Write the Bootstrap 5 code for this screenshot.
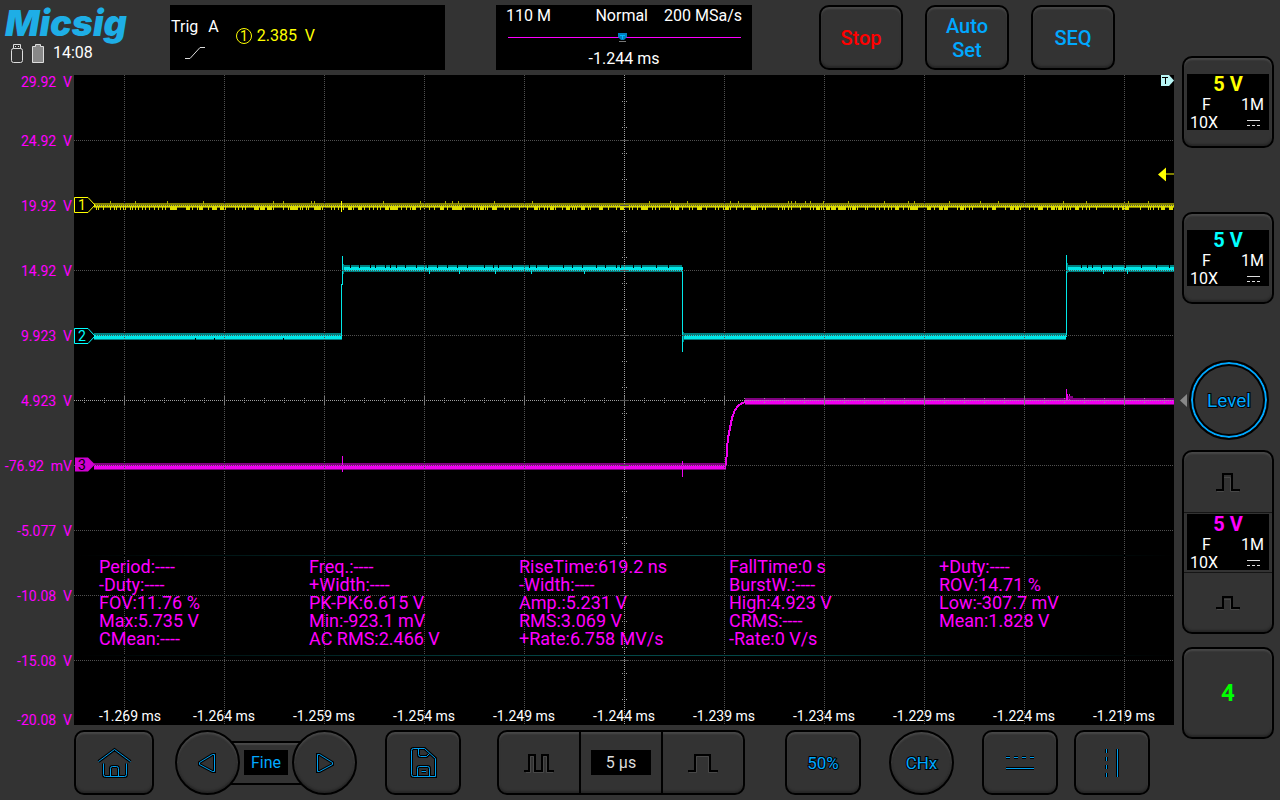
<!DOCTYPE html>
<html lang="en">
<head>
<meta charset="utf-8">
<meta name="viewport" content="width=device-width, initial-scale=1">
<title>Micsig oscilloscope</title>
<link rel="stylesheet" href="https://cdn.jsdelivr.net/npm/bootstrap@5.3.0/dist/css/bootstrap.min.css">
<style>
:root { --panel:#333; --blue:#00a8ff; --ch1:#ff0; --ch2:#0ff; --ch3:#f0f; --ch4:#0f0; }
body { background:var(--panel); color:#fff; font-family:Roboto,"Liberation Sans",sans-serif; font-size:16px; line-height:18px; }
button { font-family:inherit; }
.device { display:grid; grid-template-columns:74px minmax(0,1fr) 106px; grid-template-rows:75px minmax(0,1fr) 75px; min-height:100vh; }
.topbar { grid-column:1 / 3; padding-top:5px; }
.sidebar { grid-column:3; grid-row:1 / 4; padding:56px 6px 0 8px; }
.toolbar-row { grid-column:1 / 3; padding:5px 0 0 74px; }

.brandbox { width:170px; padding-left:5px; }
.logo { font-family:Inter,"Liberation Sans",sans-serif; font-weight:900; font-style:italic; font-size:36px; line-height:36px; color:#1eaee6; }
.status { gap:9px; padding:2px 0 0 6px; }
.screen { background:#000; height:65px; }
.trigbox { width:275px; padding:13px 1px; }
.ch1 { color:var(--ch1); } .ch2 { color:var(--ch2); } .ch3 { color:var(--ch3); }
.trigname { margin-right:10px; }
.trigval { margin-left:14px; margin-top:-4px; }
.timebox { width:256px; margin-left:51px; padding:2px 10px; }
.topkeys { gap:22px; margin-right:59px; }

.key { background:var(--panel); border:2px solid #000; border-radius:10px; color:var(--blue); padding:0; height:65px; display:flex; align-items:center; justify-content:center; box-shadow:inset 0 2px 2px #484848, inset 0 -2px 2px #262626; line-height:24px; }
.key-top { width:84px; font-size:20px; font-weight:500; }
.key-std { width:76px; }
.key-home { width:80px; }
.round { width:65px; border-radius:50%; position:relative; }
.outlined { -webkit-text-stroke:2px #000; paint-order:stroke; font-size:17px; }
.stop { color:#f00; }

.yaxis { display:grid; grid-template-rows:33px repeat(9,minmax(0,1fr)) 32px; justify-items:end; align-items:center; padding-right:2px; color:var(--ch3); font-size:14px; line-height:14px; white-space:pre; }
.yaxis > :first-child { align-self:start; }
.yaxis > :last-child { align-self:end; line-height:10px; }
.scope { background:#000; position:relative; min-height:400px; }
.scope > .plot { position:absolute; inset:0; width:100%; height:100%; }
.pin { position:absolute; left:0; transform:translateY(-50%); }
.pin-right { left:auto; right:0; }
.at1 { top:20%; } .at2 { top:40%; } .at3 { top:60%; } .attrig { top:15%; }
.readings { position:relative; margin:auto 0 51px 5px; padding:2px 0 7px 20px; display:grid; grid-template-columns:repeat(5,minmax(0,210px)); color:var(--ch3); font-size:18px; line-height:18px; white-space:nowrap; border:solid; border-width:1px 0; border-image:linear-gradient(90deg,#000,#034848 45%,#034848 60%,#000) 1; }
.xaxis { position:relative; display:grid; grid-template-columns:repeat(11,minmax(0,1fr)); text-align:center; font-size:14px; white-space:nowrap; }
.xaxis > :first-child { text-align:left; padding-left:25px; }

.chan { width:92px; height:92px; }
.chan + .chan { margin-top:64px; }
.readout { background:#000; width:82px; height:56px; color:#fff; padding:0 5px 0 3px; line-height:18px; font-size:16px; }
.volts { display:block; font-size:20px; font-weight:700; line-height:21px; margin-bottom:1px; text-align:center; padding-left:2px; }
.coupling { padding-left:12px; }
.level { width:80px; height:80px; margin:56px 0 0 7px; border:2px solid #000; border-radius:50%; background:var(--panel); color:var(--blue); font-size:19px; padding:2px 0 0; box-shadow:inset 0 0 0 2px var(--blue), inset 0 0 0 4px #000; position:relative; -webkit-text-stroke:2px #000; paint-order:stroke; }
.level svg { position:absolute; left:-11px; top:32px; }
.stack { width:92px; height:184px; margin-top:10px; flex-direction:column; overflow:hidden; }
.stack > button { background:none; border:0; width:100%; flex:1; padding:2px 0 0; }
.stack > .mid { border:1px solid #151515; border-width:1px 0; padding:1px 0 2px; width:100%; display:flex; justify-content:center; }
.last { margin-top:13px; font-size:24px; font-weight:700; color:var(--ch4); }

.finebar { width:70px; height:44px; margin:0 -9px; border:2px solid #000; border-width:2px 0; background:var(--panel); box-shadow:inset 0 2px 1px #484848; display:flex; align-items:center; justify-content:center; }
.tag { background:#000; height:25px; display:flex; align-items:center; justify-content:center; }
.tag-fine { width:44px; color:var(--blue); }
.tag-base { width:60px; color:#ddd; }
.timebase { width:248px; }
.timebase > * { flex:1; height:100%; background:none; border:0; padding:0; display:flex; align-items:center; justify-content:center; }
.timebase > * + * { border-left:2px solid #000; }
.g21 { margin-left:21px; } .g28 { margin-left:28px; } .g36 { margin-left:36px; } .g40 { margin-left:40px; } .g16 { margin-left:16px; }
.ic { fill:none; display:block; }
.ic .o { stroke:#000; stroke-width:3; } .ic .i { stroke:#00a0f0; stroke-width:1; }
.ic .k { stroke:#000; stroke-width:2; }
.ic .h { stroke:#484848; stroke-width:1; }
</style>
</head>
<body>
<svg width="0" height="0" class="position-absolute" aria-hidden="true">
  <defs>
    <path id="home" d="M1.500 15.500 L17.500 3.500 L33.500 15.500 M6.500 17.500 V28.500 Q6.500 30.500 8.500 30.500 H27.500 Q29.500 30.500 29.500 28.500 V17.500 M13.500 30.500 V22.500 Q13.500 20.500 15.500 20.500 H19.500 Q21.500 20.500 21.500 22.500 V30.500"/>
    <path id="prev" d="M17.500 2.500 V19.500 L15.500 19.500 L2.500 12.500 V10.500 L15.500 2.500 Z"/>
    <path id="next" d="M2.500 2.500 V19.500 L4.500 19.500 L17.500 12.500 V10.500 L4.500 2.500 Z"/>
    <path id="save" d="M4.500 2.500 H15.500 L26.500 12.500 V30.500 H4.500 Q2.500 30.500 2.500 28.500 V4.500 Q2.500 2.500 4.500 2.500 Z M9.500 2.500 V8.500 Q9.500 10.500 11.500 10.500 H17.500 L20.500 7.500 M8.500 30.500 V22.500 Q8.500 20.500 10.500 20.500 H18.500 Q20.500 20.500 20.500 22.500 V30.500 M12.500 25.500 H17"/>
    <path id="hcur" d="M2 3.500 H6 M10 3.500 H14 M18 3.500 H22 M26 3.500 H30 M2 14.500 H30"/>
    <path id="vcur" d="M3.500 2 V6 M3.500 10 V14 M3.500 18 V22 M3.500 26 V30 M14.500 2 V30"/>
    <path id="dc" d="M0 .5 H13 M0 5.500 H3 M5 5.500 H8 M10 5.500 H13"/>
  </defs>
</svg>

<div class="device">
  <header class="topbar d-flex align-items-start">
    <div class="brandbox">
      <div class="logo">Micsig</div>
      <div class="status d-flex align-items-center">
        <svg width="12" height="20" viewBox="0 0 12 20" fill="none" stroke="#ddd" aria-hidden="true"><path d="M2.500 5.500 V1.500 H9.500 V5.500 M4 3.500 H5 M7 3.500 H8 M.5 7.500 Q.5 5.500 2.500 5.500 H9.500 Q11.500 5.500 11.500 7.500 V17.500 Q11.500 19.500 9.500 19.500 H2.500 Q.5 19.500 .5 17.500 Z"/></svg>
        <svg width="12" height="20" viewBox="0 0 12 20" fill="#888" stroke="#ddd" aria-hidden="true"><path d="M.5 3.500 H3.500 V1.500 H8.500 V3.500 H11.500 V19.500 H.5 Z"/></svg>
        <span>14:08</span>
      </div>
    </div>
    <section class="screen trigbox d-flex" aria-label="Trigger">
      <div>
        <div class="d-flex"><span class="trigname">Trig</span><span>A</span></div>
        <svg class="d-block mt-1" width="34" height="20" viewBox="0 0 34 20" fill="none" stroke="#ddd" aria-hidden="true"><path d="M14 18.500 H19 L29 7.500 H34"/></svg>
      </div>
      <div class="ch1 trigval d-flex align-items-center gap-1">
        <svg width="20" height="20" viewBox="0 0 20 20" aria-hidden="true"><circle cx="11" cy="10" r="7.500" fill="none" stroke="#ff0" stroke-width="1"/><text x="11" y="15" text-anchor="middle" font-size="14" fill="#ff0">1</text></svg>
        <span>2.385&nbsp; V</span>
      </div>
    </section>
    <section class="screen timebox" aria-label="Acquisition">
      <div class="d-flex"><span>110 M</span><span class="ms-auto me-3">Normal</span><span>200 MSa/s</span></div>
      <svg class="d-block w-100 mt-1" height="21" viewBox="0 0 236 21" aria-hidden="true"><path d="M2 8.500 H235" stroke="#f0f"/><path d="M112 4 H121 V8 L118 11 H115 L112 8 Z" fill="#0080c0"/><path d="M114 6.500 H119 M116.500 6 V10" stroke="#00b4ff"/><path d="M113 12.500 H120" stroke="#777"/></svg>
      <div class="text-center">-1.244 ms</div>
    </section>
    <div class="topkeys d-flex ms-auto">
      <button type="button" class="key key-top stop">Stop</button>
      <button type="button" class="key key-top">Auto<br>Set</button>
      <button type="button" class="key key-top">SEQ</button>
    </div>
  </header>

  <div class="yaxis"><span>29.92  V</span><span>24.92  V</span><span>19.92  V</span><span>14.92  V</span><span>9.923  V</span><span>4.923  V</span><span>-76.92  mV</span><span>-5.077  V</span><span>-10.08  V</span><span>-15.08  V</span><span>-20.08  V</span></div>

  <main class="scope d-flex flex-column">
    <svg id="plot" class="plot" viewBox="0 0 1100 650" preserveAspectRatio="none" shape-rendering="crispEdges" aria-label="Waveforms"></svg>
    <svg class="pin at1" width="22" height="17" viewBox="0 0 22 17" aria-hidden="true"><path d="M.5 1 H14 L21 8.500 L14 16 H.5 Z" fill="#000" stroke="#ff0"/><text x="8" y="13.500" text-anchor="middle" font-size="14" fill="#ff0">1</text></svg>
    <svg class="pin at2" width="22" height="19" viewBox="0 0 22 19" aria-hidden="true"><path d="M.5 3 H14 L21 10.500 L14 18 H.5 Z" fill="#000" stroke="#0ff"/><text x="8" y="15.500" text-anchor="middle" font-size="14" fill="#0ff">2</text></svg>
    <svg class="pin at3" width="22" height="17" viewBox="0 0 22 17" aria-hidden="true"><path d="M1 1 H14 L21 8 L14 15 H1 Z" fill="#d000d0"/><text x="8" y="13" text-anchor="middle" font-size="14" fill="#000">3</text></svg>
    <svg class="pin pin-right attrig" width="16" height="17" viewBox="0 0 16 17" aria-hidden="true"><path d="M0 10 L8 3 V17 Z M7 9 H16 V10 H7 Z" fill="#ff0"/></svg>
    <svg class="position-absolute top-0 end-0" width="14" height="11" viewBox="0 0 14 11" aria-hidden="true"><path d="M1 0 H9 L14 5.500 L9 11 H1 Z" fill="#b8f4f4"/><path d="M2 2.500 H8 M5.500 2 V9" stroke="#000"/></svg>
    <section class="readings" aria-label="Measurements">
      <span>Period:----</span><span>Freq.:----</span><span>RiseTime:619.2 ns</span><span>FallTime:0 s</span><span>+Duty:----</span>
      <span>-Duty:----</span><span>+Width:----</span><span>-Width:----</span><span>BurstW.:----</span><span>ROV:14.71 %</span>
      <span>FOV:11.76 %</span><span>PK-PK:6.615 V</span><span>Amp.:5.231 V</span><span>High:4.923 V</span><span>Low:-307.7 mV</span>
      <span>Max:5.735 V</span><span>Min:-923.1 mV</span><span>RMS:3.069 V</span><span>CRMS:----</span><span>Mean:1.828 V</span>
      <span>CMean:----</span><span>AC RMS:2.466 V</span><span>+Rate:6.758 MV/s</span><span>-Rate:0 V/s</span>
    </section>
    <div class="xaxis"><span>-1.269 ms</span><span>-1.264 ms</span><span>-1.259 ms</span><span>-1.254 ms</span><span>-1.249 ms</span><span>-1.244 ms</span><span>-1.239 ms</span><span>-1.234 ms</span><span>-1.229 ms</span><span>-1.224 ms</span><span>-1.219 ms</span></div>
  </main>

  <aside class="sidebar">
    <button type="button" class="key chan">
      <span class="readout"><span class="volts ch1">5 V</span><span class="coupling d-flex justify-content-between"><span>F</span><span>1M</span></span><span class="d-flex justify-content-between align-items-center pe-1"><span>10X</span><svg class="ic" width="13" height="6"><use href="#dc" stroke="#ddd"/></svg></span></span>
    </button>
    <button type="button" class="key chan">
      <span class="readout"><span class="volts ch2">5 V</span><span class="coupling d-flex justify-content-between"><span>F</span><span>1M</span></span><span class="d-flex justify-content-between align-items-center pe-1"><span>10X</span><svg class="ic" width="13" height="6"><use href="#dc" stroke="#ddd"/></svg></span></span>
    </button>
    <button type="button" class="level">Level<svg width="8" height="13" aria-hidden="true"><path d="M0 6.500 L7 0 V13 Z" fill="#888"/></svg></button>
    <div class="key stack">
      <button type="button" aria-label="Increase scale"><svg class="ic mx-auto" width="26" height="20"><path class="h" d="M2 18.500 H8.500 V4.500 H15.500 V18.500 H24"/><path class="k" d="M1 17 H8 V1 H17 V17 H25"/></svg></button>
      <div class="mid"><span class="readout"><span class="volts ch3">5 V</span><span class="coupling d-flex justify-content-between"><span>F</span><span>1M</span></span><span class="d-flex justify-content-between align-items-center pe-1"><span>10X</span><svg class="ic" width="13" height="6"><use href="#dc" stroke="#ddd"/></svg></span></span></div>
      <button type="button" aria-label="Decrease scale"><svg class="ic mx-auto" width="26" height="16"><path class="h" d="M2 14.500 H8.500 V4.500 H15.500 V14.500 H24"/><path class="k" d="M1 13 H8 V2 H17 V13 H25"/></svg></button>
    </div>
    <button type="button" class="key chan last">4</button>
  </aside>

  <footer class="toolbar-row d-flex align-items-start">
    <button type="button" class="key key-home" aria-label="Home"><svg class="ic" width="35" height="33"><use href="#home" class="o"/><use href="#home" class="i"/></svg></button>
    <div class="d-flex align-items-center g21">
      <button type="button" class="key round z-1" aria-label="Previous"><svg class="ic" width="22" height="22"><use href="#prev" class="o"/><use href="#prev" class="i"/></svg></button>
      <div class="finebar"><span class="tag tag-fine">Fine</span></div>
      <button type="button" class="key round z-1" aria-label="Next"><svg class="ic" width="20" height="22"><use href="#next" class="o"/><use href="#next" class="i"/></svg></button>
    </div>
    <button type="button" class="key key-std g28" aria-label="Save"><svg class="ic" width="29" height="33"><use href="#save" class="o"/><use href="#save" class="i"/></svg></button>
    <div class="key timebase g36">
      <button type="button" aria-label="Longer time base"><svg class="ic" width="30" height="20"><path class="h" d="M2 19.500 H6.500 V3.500 H9.500 V19.500 H19.500 V3.500 H22.500 V19.500 H29"/><path class="k" d="M0 18 H5 V2 H11 V18 H18 V2 H24 V18 H30"/></svg></button>
      <div><span class="tag tag-base">5 µs</span></div>
      <button type="button" aria-label="Shorter time base"><svg class="ic" width="30" height="20"><path class="h" d="M1 19.500 H8.500 V3.500 H20.500 V19.500 H29"/><path class="k" d="M0 18 H7 V2 H22 V18 H30"/></svg></button>
    </div>
    <button type="button" class="key key-std outlined g40">50%</button>
    <button type="button" class="key round outlined g28">CHx</button>
    <button type="button" class="key key-std g28" aria-label="Horizontal cursors"><svg class="ic" width="32" height="18"><use href="#hcur" class="o"/><use href="#hcur" class="i"/></svg></button>
    <button type="button" class="key key-std g16" aria-label="Vertical cursors"><svg class="ic" width="18" height="32"><use href="#vcur" class="o"/><use href="#vcur" class="i"/></svg></button>
  </footer>
</div>
<script src="https://cdn.jsdelivr.net/npm/bootstrap@5.3.0/dist/js/bootstrap.bundle.min.js"></script>
<script>
// Builds the waveforms and the graticule in an 1100 x 650 space (100 x 65 per division).
(function () {
  var out = '', seed = 7;
  function rnd() { seed = (seed * 16807) % 2147483647; return seed / 2147483647; }
  function box(x, y, w, h, c) { out += '<rect x="' + x + '" y="' + y + '" width="' + w + '" height="' + h + '" fill="' + c + '"/>'; }
  function band(x1, x2, y, dim, lit) { box(x1, y, x2 - x1, 7, dim); box(x1, y + 2, x2 - x1, 4, lit); }
  // channel 1: flat with noise
  box(20, 128, 1080, 5, '#858500'); box(20, 130, 1080, 2, '#d8d800');
  for (var x = 22; x < 1098; x += 2 + Math.floor(rnd() * 4)) {
    if (rnd() < .8) box(x, 131, rnd() < .25 ? 4 : 1, 4, '#dede00');
    if (rnd() < .09) box(x, 126, 1, 3, '#b0b000');
  }
  box(267, 126, 1, 11, '#ff0');
  // channel 2: square wave
  var d2 = '#008080', l2 = '#00e8e8';
  band(20, 268, 258, d2, l2); band(609, 992, 258, d2, l2);
  band(269, 608, 190, d2, l2); band(993, 1100, 190, d2, l2);
  for (x = 276; x < 1098; x += 4 + Math.floor(rnd() * 14)) {
    if (x > 600 && x < 1000) continue;
    box(x, 190, 1, 3, '#000');
    if (rnd() < .25) box(x + 2, 196, 1, 3, l2);
  }
  [121, 140, 209].forEach(function (p) { box(p, 263, 1, 2, '#000'); });
  box(267, 209, 1, 54, l2); box(268, 181, 1, 29, l2); box(269, 189, 1, 10, d2);
  box(608, 192, 1, 85, l2); box(609, 257, 1, 10, d2);
  box(992, 180, 1, 82, l2); box(993, 188, 1, 10, d2);
  // channel 3: step with exponential rise
  var d3 = '#800080', l3 = '#f000f0';
  band(20, 652, 388, d3, l3); band(671, 1100, 323, d3, l3);
  out += '<path d="M652 391 L653 373 L654 363 L656 353 L658 343 L661 335 L664 331 L668 328 L672 327" fill="none" stroke="' + l3 + '" stroke-width="2"/>';
  box(268, 381, 1, 16, l3); box(608, 386, 1, 16, l3);
  box(992, 314, 1, 12, l3); box(993, 319, 1, 6, l3); box(995, 319, 1, 6, l3); box(994, 321, 5, 3, d3);
  // graticule over the traces
  function line(x1, y1, x2, y2, c) { out += '<line x1="' + x1 + '" y1="' + y1 + '" x2="' + x2 + '" y2="' + y2 + '" stroke="' + c + '" stroke-dasharray="1 1"/>'; }
  for (var i = 0; i < 11; i++) line(50.5 + i * 100, 0, 50.5 + i * 100, 650, i === 5 ? '#a0a0a0' : '#505050');
  for (i = 1; i < 10; i++) line(0, i * 65 + .5, 1100, i * 65 + .5, i === 5 ? '#a0a0a0' : '#505050');
  for (i = 10; i < 1100; i += 20) { box(i, 323, 1, 1, '#999'); box(i, 327, 1, 1, '#999'); }
  for (i = 0; i < 11; i++) box(50 + i * 100, 321, 1, 9, '#777');
  for (i = 26; i < 650; i += 26) { box(548, i, 1, 1, '#999'); box(552, i, 1, 1, '#999'); }
  for (i = 65; i < 650; i += 65) box(546, i, 9, 1, '#555');
  document.getElementById('plot').innerHTML = out;
})();
</script>
</body>
</html>
